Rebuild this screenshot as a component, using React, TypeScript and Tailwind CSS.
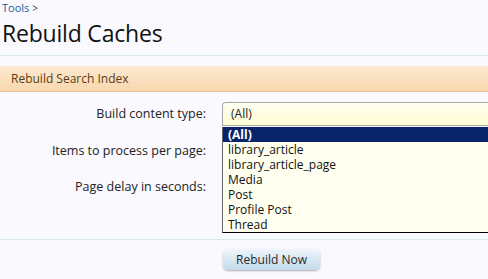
import React from "react";

const items = ["(All)", "library_article", "library_article_page", "Media", "Post", "Profile Post", "Thread"];

export default function App() {
  return (
    <div
      className="relative w-[488px] h-[279px] overflow-hidden bg-[#f9f9fe] text-[#222]"
      style={{ fontFamily: '"Open Sans", "Noto Sans", sans-serif' }}
    >
      <div className="pl-[2px] pt-[1px] h-[15px] text-[11px] leading-[14px] text-[#176093]">
        Tools <span className="text-[#333] text-[10px]">&gt;</span>
      </div>
      <h1 className="pl-[2px] h-[40px] text-[23px] leading-[36px] text-[#111] tracking-[-0.2px]">Rebuild Caches</h1>
      <div className="border-b border-[#d8e6ee]" />
      <div className="mt-[10px] h-[26px] border-b border-[#e3c28c] bg-gradient-to-b from-[#fce9d2] to-[#f8d8ae] pl-[11px] text-[12px] leading-[25px] text-[#5a3c12]">
        Rebuild Search Index
      </div>
      <div className="pt-[10px] text-[12.5px]">
        <div className="flex h-[24px] items-center">
          <div className="w-[206px] shrink-0 text-right text-[#222]">Build content type:</div>
          <div className="relative ml-[16px] shrink-0">
            <div className="h-[24px] w-[300px] rounded-tl-[4px] border border-[#a8a8a8] border-r-0 bg-gradient-to-b from-[#fffff0] to-[#fffcd4] pl-[8px] text-[12px] leading-[22px] text-[#222]">
              (All)
            </div>
            <div className="absolute left-0 top-[25px] z-10 w-[300px] border-l border-l-[#666] border-b border-b-black bg-[#ffffef] text-[12px]">
              {items.map((it, i) => (
                <div
                  key={it}
                  className={
                    i === 0
                      ? "h-[15px] pl-[5px] leading-[15px] bg-[#0a246a] text-white font-bold"
                      : "h-[15px] pl-[5px] leading-[15px] text-[#111]"
                  }
                >
                  {it}
                </div>
              ))}
            </div>
          </div>
        </div>
        <div className="mt-[13px] flex h-[24px] items-center">
          <div className="w-[206px] shrink-0 text-right text-[#222]">Items to process per page:</div>
          <div className="ml-[16px] h-[24px] w-[80px] shrink-0 border border-[#a8a8a8] bg-[#fffff0]" />
        </div>
        <div className="mt-[12px] flex h-[24px] items-center">
          <div className="w-[206px] shrink-0 text-right text-[#222]">Page delay in seconds:</div>
          <div className="ml-[16px] h-[24px] w-[80px] shrink-0 border border-[#a8a8a8] bg-[#fffff0]" />
        </div>
      </div>
      <div className="mt-[40px] border-t border-[#d8e6ee] pt-[6px] pl-[223px]">
        <button className="h-[21px] w-[97px] rounded-[5px] bg-gradient-to-b from-[#eef5fb] to-[#c3dbec] text-[12px] leading-[21px] text-[#2a2a2a] shadow-[0_1px_2px_rgba(0,0,0,0.3)]">
          Rebuild Now
        </button>
      </div>
    </div>
  );
}
